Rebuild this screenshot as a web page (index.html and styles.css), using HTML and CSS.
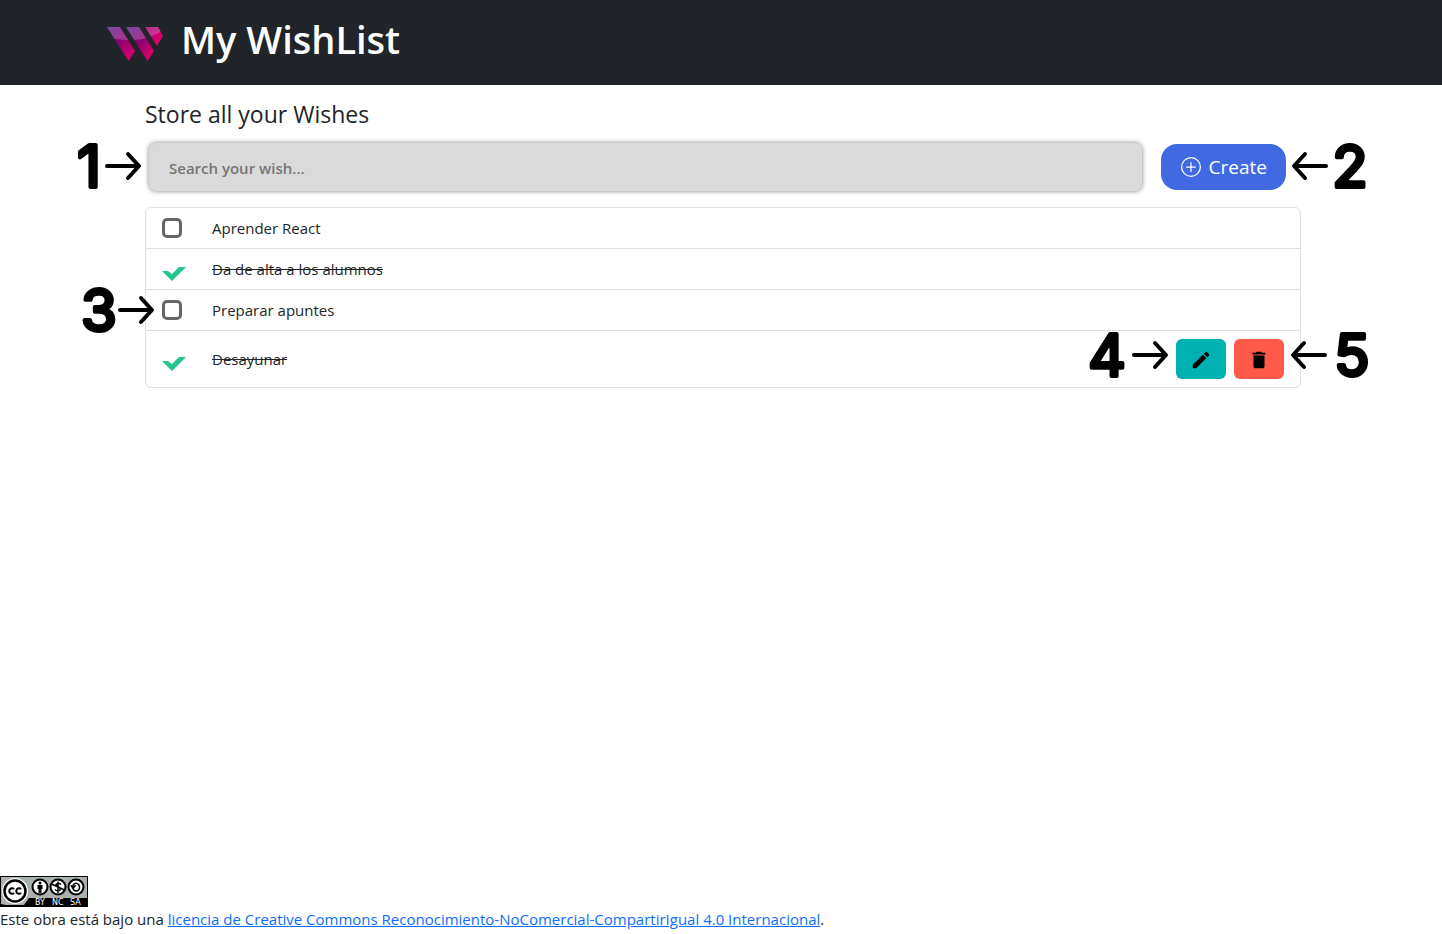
FILE: index.html
```html
<!DOCTYPE html>
<html lang="es">
<head>
<meta charset="utf-8">
<meta name="viewport" content="width=device-width, initial-scale=1">
<title>My WishList</title>
<link rel="stylesheet" href="styles.css">
</head>
<body>
<svg class="defs" aria-hidden="true">
  <symbol id="arrow-right" viewBox="0 0 37 30"><path d="M2 15H33M23 3L34 15L23 27" fill="none" stroke="#000" stroke-width="4" stroke-linecap="round" stroke-linejoin="round"/></symbol>
  <symbol id="arrow-left" viewBox="0 0 37 30"><path d="M35 15H4M14 3L3 15L14 27" fill="none" stroke="#000" stroke-width="4" stroke-linecap="round" stroke-linejoin="round"/></symbol>
</svg>
<header class="topbar">
  <svg class="logo" viewBox="0 0 56 36" aria-hidden="true">
    <defs>
      <linearGradient id="stroke" x1="0" y1="0" x2="0.8" y2="1"><stop offset="0" stop-color="#50208c"/><stop offset="0.5" stop-color="#8c0072"/><stop offset="1" stop-color="#e2006c"/></linearGradient>
      <linearGradient id="stroke-end" x1="0" y1="0" x2="1" y2="0.8"><stop offset="0" stop-color="#8c0072"/><stop offset="1" stop-color="#f0006a"/></linearGradient>
      <clipPath id="shape"><path d="M0 1H13L28 25L21.500 35ZM19 1H32L47 25L40.500 35ZM38 1H51L56 10L50 20Z"/></clipPath>
    </defs>
    <path d="M0 1H13L28 25L21.500 35Z" fill="url(#stroke)"/>
    <path d="M19 1H32L47 25L40.500 35Z" fill="url(#stroke)"/>
    <path d="M38 1H51L56 10L50 20Z" fill="url(#stroke-end)"/>
    <path clip-path="url(#shape)" d="M0 0H56V4Q42 15 20 14Q8 14 0 10Z" fill="#fff" fill-opacity="0.2"/>
  </svg>
  <h1 class="title">My WishList</h1>
</header>
<main class="content">
  <h2 class="subtitle">Store all your Wishes</h2>
  <form class="toolbar">
    <input class="search" type="search" placeholder="Search your wish..." aria-label="Search your wish">
    <button class="create" type="button">
      <svg class="create-icon" viewBox="0 0 16 16" aria-hidden="true"><path fill="currentColor" d="M8 15A7 7 0 1 1 8 1a7 7 0 0 1 0 14zm0 1A8 8 0 1 0 8 0a8 8 0 0 0 0 16z"/><path fill="currentColor" d="M8 4a.5.5 0 0 1 .5.5v3h3a.5.5 0 0 1 0 1h-3v3a.5.5 0 0 1-1 0v-3h-3a.5.5 0 0 1 0-1h3v-3A.5.5 0 0 1 8 4z"/></svg>
      Create
    </button>
    <span class="marker marker-search"><svg class="digit" viewBox="0 0 38 50"><text x="22" y="46" text-anchor="middle">1</text></svg><svg class="arrow"><use href="#arrow-right"/></svg></span>
    <span class="marker marker-create"><svg class="arrow"><use href="#arrow-left"/></svg><svg class="digit" viewBox="0 0 38 50"><text x="19" y="46" text-anchor="middle">2</text></svg></span>
  </form>
  <ul class="wishes">
    <li class="wish"><input class="check" type="checkbox" id="w1"><label class="wish-text" for="w1">Aprender React</label></li>
    <li class="wish"><input class="check" type="checkbox" id="w2" checked><label class="wish-text" for="w2">Da de alta a los alumnos</label></li>
    <li class="wish"><input class="check" type="checkbox" id="w3"><label class="wish-text" for="w3">Preparar apuntes</label>
      <span class="marker marker-check"><svg class="digit" viewBox="0 0 38 50"><text x="19" y="46" text-anchor="middle">3</text></svg><svg class="arrow"><use href="#arrow-right"/></svg></span>
    </li>
    <li class="wish"><input class="check" type="checkbox" id="w4" checked><label class="wish-text" for="w4">Desayunar</label>
      <button class="action edit" type="button" aria-label="Edit"><svg class="action-icon" viewBox="0 0 24 24"><path d="M3 17.250V21h3.750L17.810 9.940l-3.750-3.750L3 17.250zM20.710 7.040a1 1 0 0 0 0-1.410l-2.340-2.340a1 1 0 0 0-1.410 0l-1.830 1.830 3.750 3.750 1.830-1.830z"/></svg></button>
      <button class="action delete" type="button" aria-label="Delete"><svg class="action-icon" viewBox="0 0 24 24"><path d="M6 19c0 1.100.9 2 2 2h8c1.100 0 2-.9 2-2V7H6v12zM19 4h-3.500l-1-1h-5l-1 1H5v2h14V4z"/></svg></button>
      <span class="marker marker-edit"><svg class="digit" viewBox="0 0 38 50"><text x="19" y="46" text-anchor="middle">4</text></svg><svg class="arrow"><use href="#arrow-right"/></svg></span>
      <span class="marker marker-delete"><svg class="arrow"><use href="#arrow-left"/></svg><svg class="digit" viewBox="0 0 38 50"><text x="19" y="46" text-anchor="middle">5</text></svg></span>
    </li>
  </ul>
</main>
<footer class="footer">
  <svg class="badge" viewBox="0 0 88 31" role="img" aria-label="Licencia de Creative Commons">
    <rect width="88" height="31" fill="#000"/>
    <rect x="1" y="1" width="86" height="21" fill="#aab2ab"/>
    <path d="M1 22V28L6 29H24L29 22Z" fill="#aab2ab"/>
    <circle cx="15" cy="15" r="13" fill="#fff"/>
    <circle cx="15" cy="15" r="10.500" fill="#fff" stroke="#000" stroke-width="2.500"/>
    <path d="M14 13.200A2.700 2.700 0 1 0 14 16.800M21 13.200A2.700 2.700 0 1 0 21 16.800" fill="none" stroke="#000" stroke-width="2"/>
    <g fill="#fff" stroke="#000" stroke-width="2"><circle cx="40" cy="11" r="7.500"/><circle cx="58" cy="11" r="7.500"/><circle cx="76" cy="11" r="7.500"/></g>
    <circle cx="40" cy="7" r="1.500"/><path d="M37.500 9H42.500V13H41.500V17H38.500V13H37.500Z"/>
    <path d="M61 8.500Q58 6 56 8.500Q56 10.500 58.500 11Q61 12 60 14Q58 16 55 13.500M58 5.500V17M51.500 8L64.500 14" fill="none" stroke="#000" stroke-width="1.500"/>
    <path d="M73 9Q76 5.500 79 9Q80.500 12 78 14.500Q75 16 73 13M71.500 10H75L73 12.500Z" fill="none" stroke="#000" stroke-width="1.500"/>
    <g class="badge-text"><text x="35" y="29">BY</text><text x="52" y="29">NC</text><text x="70" y="29">SA</text></g>
  </svg>
  <p class="license">Este obra está bajo una <a class="license-link" href="#">licencia de Creative Commons Reconocimiento-NoComercial-CompartirIgual 4.0 Internacional</a>.</p>
</footer>
</body>
</html>
```
FILE: styles.css
```css
* { box-sizing: border-box; }

body {
  display: flex;
  flex-direction: column;
  min-height: 100vh;
  margin: 0;
  background: #fff;
  color: #212529;
  font-family: "Open Sans", "Noto Sans", sans-serif;
  font-size: 15px;
  line-height: 24px;
}

.defs { position: absolute; width: 0; height: 0; }

.topbar {
  display: flex;
  align-items: center;
  gap: 18px;
  padding: 15px 107px 22px;
  background: #212529;
}

.logo { width: 56px; height: 36px; margin-top: 9px; }

.title {
  margin: 0;
  color: #fff;
  font-size: 38px;
  font-weight: 600;
  line-height: 48px;
}

.content { flex: 1; padding: 15px 141px 0 145px; }

.subtitle {
  margin: 0 0 14px;
  font-size: 23px;
  font-weight: 400;
  line-height: 29px;
}

.toolbar {
  position: relative;
  display: flex;
  align-items: center;
  gap: 19px;
  margin: 0 0 16px;
  padding: 0 15px 0 4px;
}

.search {
  flex: 1;
  min-width: 0;
  height: 48px;
  padding: 2px 20px 0;
  border: 0;
  border-radius: 7px;
  background: #dadada;
  box-shadow: 0 0 5px rgba(0, 0, 0, 0.5);
  color: #212529;
  font: 600 15px "Open Sans", "Noto Sans", sans-serif;
}

.search::placeholder { color: #757575; opacity: 1; }

.create {
  display: flex;
  align-items: center;
  gap: 8px;
  height: 46px;
  padding: 0 19px 0 20px;
  border: 0;
  border-radius: 16px;
  background: #4169e1;
  color: #fff;
  font: 400 19px "Open Sans", "Noto Sans", sans-serif;
}

.create-icon { width: 20px; height: 20px; }

.wishes {
  margin: 0;
  padding: 0;
  border: 1px solid #dfdfdf;
  border-radius: 6px;
  list-style: none;
}

.wish {
  position: relative;
  display: flex;
  align-items: center;
  gap: 8px;
  padding: 8px 16px;
}

.wish + .wish { border-top: 1px solid #dfdfdf; }

.check {
  width: 20px;
  height: 20px;
  margin: 0 22px 0 0;
  border: 3px solid #666;
  border-radius: 5px;
  background: #fff;
  appearance: none;
}

.check:checked {
  width: 24px;
  height: 24px;
  margin-right: 18px;
  border: 0;
  border-radius: 0;
  background: #26c58f;
  clip-path: polygon(0 14px, 6px 14px, 10px 17px, 17px 10px, 24px 10px, 10px 24px);
}

.wish-text { flex: 1; }

.check:checked + .wish-text { text-decoration: line-through; }

.action {
  display: grid;
  place-items: center;
  width: 50px;
  height: 40px;
  padding: 2px 0 0;
  border: 0;
  border-radius: 6px;
}

.edit { background: #00b1b1; }

.delete { background: #ff5a49; }

.action-icon { width: 22px; height: 22px; }

.marker {
  position: absolute;
  display: flex;
  align-items: center;
  gap: 3px;
  pointer-events: none;
}

.marker-search { top: -2px; right: 100%; margin-right: 3px; gap: 0; }
.marker-create { top: -2px; left: 100%; margin-left: -10px; }
.marker-check { top: -5px; right: 100%; margin-right: -9px; gap: 0; }
.marker-edit { top: -1px; right: 131px; gap: 6px; }
.marker-delete { top: -1px; left: 100%; margin-left: -10px; gap: 6px; }

.arrow { width: 37px; height: 30px; }

.digit {
  width: 38px;
  height: 50px;
  overflow: visible;
  font-family: Inter, sans-serif;
  font-size: 58px;
  font-weight: 400;
  stroke: #000;
  stroke-width: 4px;
  stroke-linejoin: round;
}

.badge { display: block; width: 88px; height: 31px; }

.badge-text {
  fill: #fff;
  font-family: "DejaVu Sans", sans-serif;
  font-size: 8px;
}

.license { margin: 0; padding-bottom: 3px; }

.license-link { color: #0d6efd; }
```
